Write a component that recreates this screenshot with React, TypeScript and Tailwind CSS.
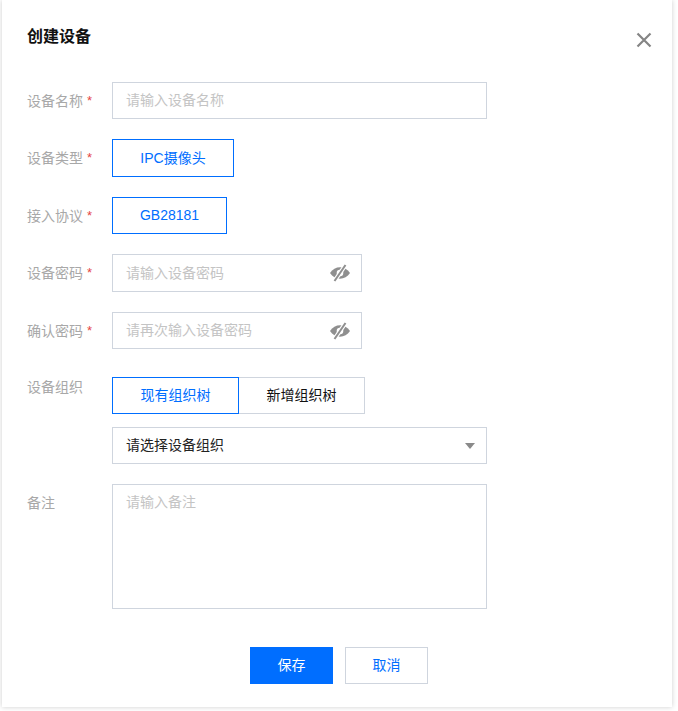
import React from "react";

const font = { };

function Eye() {
  return (
    <svg width="22" height="18" viewBox="0 0 22 18" fill="none" className="shrink-0">
      <path d="M1 9C3.5 5.2 7 3.3 11 3.3S18.500 5.200 21 9c-2.500 3.800-6 5.700-10 5.700S3.500 12.800 1 9Z" fill="#8f8f8f" />
      <circle cx="11" cy="9" r="3.300" fill="#ffffff" />
      <path d="M16.500 1 5.500 17" stroke="#ffffff" strokeWidth="4.200" />
      <path d="M16.500 1 5.500 17" stroke="#8f8f8f" strokeWidth="2" />
    </svg>
  );
}

function Label({ text, req }: { text: string; req?: boolean }) {
  return (
    <div className="w-[85px] shrink-0 flex items-center text-[14px] text-[#a8a8a8] leading-[20px]">
      <span>{text}</span>
      {req && <span className="ml-[4px] text-[#e54545] text-[13px] leading-[20px] font-['Liberation_Sans',sans-serif]">*</span>}
    </div>
  );
}

function TextInput({ placeholder, w, eye }: { placeholder: string; w: string; eye?: boolean }) {
  return (
    <div className={`${w} h-[37px] border border-[#cfd5de] flex items-center justify-between pl-[13px] pr-[10px] text-[14px] text-[#c4c4c4]`}>
      <span>{placeholder}</span>
      {eye && <Eye />}
    </div>
  );
}

export default function App() {
  return (
    <div className="w-[678px] h-[711px] bg-white overflow-hidden font-['Liberation_Sans','Noto_Sans_CJK_SC',sans-serif]">
      <div className="ml-[2px] w-[670px] h-[707px] bg-white shadow-[0_0_5px_rgba(0,0,0,0.2)] pl-[25px] pt-[26px] relative">
        <h1 className="text-[16px] leading-[22px] font-bold text-[#111111]">创建设备</h1>
        <svg width="16" height="16" viewBox="0 0 16 16" className="absolute left-[634px] top-[32px]">
          <path d="M1.500 1.500 14.500 14.500M14.500 1.500 1.500 14.500" stroke="#858585" strokeWidth="2.200" />
        </svg>

        <div className="mt-[34px] flex flex-col">
          <div className="flex items-center">
            <Label text="设备名称" req />
            <TextInput placeholder="请输入设备名称" w="w-[375px]" />
          </div>
          <div className="flex items-center mt-[20px]">
            <Label text="设备类型" req />
            <div className="w-[122px] h-[38px] border border-[#006eff] flex items-center justify-center text-[14px] text-[#006eff]">IPC摄像头</div>
          </div>
          <div className="flex items-center mt-[20px]">
            <Label text="接入协议" req />
            <div className="w-[115px] h-[37px] border border-[#006eff] flex items-center justify-center text-[14px] text-[#006eff]">GB28181</div>
          </div>
          <div className="flex items-center mt-[20px]">
            <Label text="设备密码" req />
            <div className="h-[38px] flex items-stretch"><div className="w-[250px] h-[38px] border border-[#cfd5de] flex items-center justify-between pl-[13px] pr-[10px] text-[14px] text-[#c4c4c4]"><span>请输入设备密码</span><Eye /></div></div>
          </div>
          <div className="flex items-center mt-[20px]">
            <Label text="确认密码" req />
            <TextInput placeholder="请再次输入设备密码" w="w-[250px]" eye />
          </div>
          <div className="flex items-start mt-[28px]">
            <Label text="设备组织" />
            <div className="flex flex-col">
              <div className="flex h-[37px] text-[14px]">
                <div className="w-[127px] border border-[#006eff] flex items-center justify-center text-[#006eff]">现有组织树</div>
                <div className="w-[126px] border border-l-0 border-[#cfd5de] flex items-center justify-center text-[#111111]">新增组织树</div>
              </div>
              <div className="mt-[13px] w-[375px] h-[37px] border border-[#cfd5de] flex items-center justify-between pl-[13px] pr-[11px] text-[14px] text-[#222222]">
                <span>请选择设备组织</span>
                <span className="w-0 h-0 border-x-[5px] border-x-transparent border-t-[6px] border-t-[#8a8a8a]" />
              </div>
            </div>
          </div>
          <div className="flex items-start mt-[20px]">
            <div className="pt-[9px]"><Label text="备注" /></div>
            <div className="w-[375px] h-[125px] border border-[#cfd5de] pl-[13px] pt-[7px] text-[14px] leading-[20px] text-[#c4c4c4]">请输入备注</div>
          </div>
          <div className="mt-[38px] ml-[223px] flex gap-[12px]">
            <div className="w-[83px] h-[37px] bg-[#006eff] text-white text-[14px] flex items-center justify-center">保存</div>
            <div className="w-[83px] h-[37px] border border-[#cfd5de] text-[#006eff] text-[14px] flex items-center justify-center">取消</div>
          </div>
        </div>
      </div>
    </div>
  );
}
